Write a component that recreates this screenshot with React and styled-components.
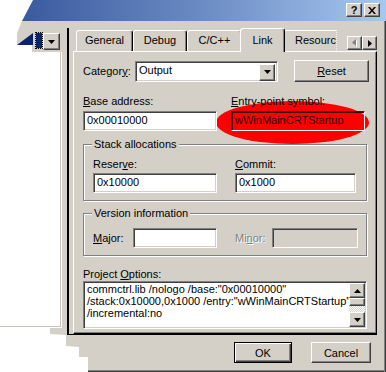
import React from 'react'
import styled, { createGlobalStyle, css } from 'styled-components'

const GlobalStyle = createGlobalStyle`
  html, body {
    margin: 0;
    padding: 0;
    background: #fff;
  }
  body {
    font-family: "Liberation Sans", Arial, sans-serif;
    font-size: 11px;
    color: #000;
  }
`;

const raised = css`
  background: #d4d0c8;
  border: 1px solid;
  border-color: #fff #404040 #404040 #fff;
  box-shadow: inset -1px -1px #808080;
`;

const Shot = styled.div`
  width: 386px;
  height: 372px;
  overflow: hidden;
  display: flex;
  flex-direction: column;
  background: #fff;
`;

const TitleBar = styled.div`
  flex: none;
  height: 21px;
  box-sizing: border-box;
  display: flex;
  justify-content: flex-end;
  align-items: flex-start;
  gap: 2px;
  padding: 3px 6px 0 0;
  background: linear-gradient(90deg, #34549a 0%, #6e8ec6 55%, #a6c8ee 100%);
  clip-path: polygon(33px 0, 100% 0, 100% 100%, 22px 100%);
`;

const CaptionButton = styled.div`
  ${raised};
  width: 16px;
  height: 14px;
  box-sizing: border-box;
  display: flex;
  align-items: center;
  justify-content: center;
  font-weight: bold;
  font-size: 11px;
  line-height: 1;
`;

const Body = styled.div`
  flex: 1;
  display: flex;
  background: #d4d0c8;
  box-shadow: inset -1px 0 #404040, inset -2px 0 #808080, inset 0 -1px #404040, inset 0 -2px #808080;
  clip-path: polygon(22px 0, 100% 0, 100% 100%, 88px 100%, 88px 336px, 79px 336px, 79px 326px, 66px 325px, 66px 314px, 50px 313px, 50px 306px, 0 306px, 0 31px, 32px 31px, 32px 24px, 17px 24px, 17px 12px);
`;

/* torn piece of the left pane */
const LeftPane = styled.div`
  width: 67px;
  flex: none;
  display: flex;
  flex-direction: column;
`;

const ComboScrap = styled.div`
  height: 31px;
  box-sizing: border-box;
  padding: 12px 0 0 17px;
  display: flex;
  align-items: flex-start;
`;

const SelTri = styled.div`
  width: 16px;
  height: 12px;
  background: #0a246a;
  clip-path: polygon(0 100%, 100% 0, 100% 100%);
`;

const SelBlock = styled.div`
  width: 6px;
  height: 15px;
  margin: 0 1px 0 3px;
  background: #0a246a;
  outline: 1px dotted #000;
`;

const DropButton = styled.div`
  ${raised};
  width: ${p => p.$w || 17}px;
  height: ${p => p.$h || 17}px;
  box-sizing: border-box;
  flex: none;
  display: flex;
  align-items: center;
  justify-content: center;
`;

const TreeBox = styled.div`
  width: 62px;
  height: 276px;
  box-sizing: border-box;
  background: #fff;
  border-right: 1px solid #fff;
  border-bottom: 1px solid #fff;
  box-shadow: inset -1px -1px #c8c4bc;
`;

const RightPane = styled.div`
  flex: 1;
  display: flex;
  flex-direction: column;
  padding-right: 9px;
`;

const Sheet = styled.div`
  margin-top: 7px;
  border-left: 2px solid #000;
  border-bottom: 1px solid #000;
  padding-left: 4px;
  display: flex;
  flex-direction: column;
`;

const TabStrip = styled.div`
  height: 23px;
  display: flex;
  align-items: flex-end;
  padding-left: 3px;
`;

const Tab = styled.div`
  position: relative;
  z-index: ${p => (p.$active ? 2 : 1)};
  flex: none;
  width: ${p => p.$w}px;
  height: ${p => (p.$active ? 24 : 21)}px;
  margin: 0 ${p => (p.$active ? -2 : 0)}px ${p => (p.$active ? -1 : 0)}px;
  box-sizing: border-box;
  background: #d4d0c8;
  border: 1px solid;
  border-bottom: none;
  border-color: #fff #000 transparent #fff;
  border-radius: 3px 3px 0 0;
  box-shadow: inset -1px 0 #808080;
  padding-top: ${p => (p.$active ? 5 : 3)}px;
  text-align: center;
  line-height: 13px;
  white-space: nowrap;
  overflow: hidden;
  ${p => p.$torn && css`
    text-align: left;
    padding-left: 11px;
    border-right: 1px dotted #f4f4f4;
    border-top-right-radius: 0;
    box-shadow: none;
  `}
`;

const Arrows = styled.div`
  margin: 0 0 1px auto;
  display: flex;
`;

const ArrowButton = styled.div`
  ${raised};
  width: 15px;
  height: 14px;
  box-sizing: border-box;
  display: flex;
  align-items: center;
  justify-content: center;
`;

const Panel = styled.div`
  position: relative;
  height: 283px;
  box-sizing: border-box;
  border: 1px solid;
  border-color: #fff #000 #000 #fff;
  box-shadow: inset -1px -1px #808080;
  padding: 8px 8px 0 9px;
`;

const Highlight = styled.div`
  position: absolute;
  left: 142px;
  top: 49px;
  width: 153px;
  height: 43px;
  border-radius: 50%;
  background: #ff0000;
`;

const Content = styled.div`
  position: relative;
  z-index: 1;
  display: flex;
  flex-direction: column;
`;

const TopRow = styled.div`
  display: flex;
  align-items: center;
  height: 22px;
`;

const Label = styled.div`
  line-height: 13px;
  height: 13px;
  white-space: nowrap;
  width: ${p => (p.$w ? `${p.$w}px` : 'auto')};
  flex: none;
  color: ${p => (p.$disabled ? '#808080' : '#000')};
  text-shadow: ${p => (p.$disabled ? '1px 1px 0 #fff' : 'none')};
`;

const Field = styled.div`
  width: ${p => (p.$w ? `${p.$w}px` : 'auto')};
  height: ${p => p.$h || 20}px;
  box-sizing: border-box;
  flex: none;
  border: 1px solid;
  border-color: #808080 #fff #fff #808080;
  box-shadow: inset 1px 1px #404040, inset -1px -1px #d4d0c8;
  background: ${p => (p.$disabled ? '#d4d0c8' : '#fff')};
  padding: 2px 3px 0;
  line-height: 13px;
  white-space: nowrap;
  overflow: hidden;
  ${p => p.$hot && css`
    background: transparent;
    border-color: #800000 #fff #fff #800000;
    box-shadow: inset 1px 1px #400000;
    color: #2a0000;
  `}
`;

const Combo = styled(Field)`
  display: flex;
  align-items: flex-start;
  justify-content: space-between;
  padding: 2px 2px 0 3px;
`;

const PushButton = styled.div`
  ${raised};
  width: ${p => p.$w}px;
  height: ${p => p.$h || 22}px;
  box-sizing: border-box;
  flex: none;
  display: flex;
  align-items: center;
  justify-content: center;
  margin-left: ${p => (p.$push ? 'auto' : '0')};
  margin-right: ${p => p.$mr || 0}px;
  ${p => p.$default && css`
    border: 1px solid #000;
    box-shadow: inset 1px 1px #fff, inset -1px -1px #404040, inset -2px -2px #808080;
  `}
`;

const Pair = styled.div`
  display: grid;
  grid-template-columns: ${p => p.$cols};
  column-gap: ${p => p.$gap}px;
  margin-top: ${p => p.$mt || 0}px;
`;

const Stack = styled.div`
  display: flex;
  flex-direction: column;
  gap: ${p => p.$gap || 3}px;
`;

const Group = styled.div`
  margin-top: ${p => p.$mt}px;
  width: 284px;
  box-sizing: border-box;
  border: 1px solid #808080;
  box-shadow: inset 1px 1px #fff, 1px 1px #fff;
  padding: 0 9px 7px;
  display: flex;
  flex-direction: column;
`;

const GroupCaption = styled.div`
  margin: -7px 0 0 -1px;
  padding: 0 2px;
  width: fit-content;
  background: #d4d0c8;
  line-height: 13px;
  height: 13px;
`;

const InlineRow = styled.div`
  display: flex;
  align-items: center;
  margin-top: ${p => p.$mt || 0}px;
`;

const Memo = styled.div`
  width: 284px;
  height: 48px;
  box-sizing: border-box;
  display: flex;
  border: 1px solid;
  border-color: #808080 #fff #fff #808080;
  box-shadow: inset 1px 1px #404040, inset -1px -1px #d4d0c8;
  background: #fff;
  padding: 1px;
`;

const MemoText = styled.div`
  flex: 1;
  overflow: hidden;
  white-space: nowrap;
  line-height: 12px;
  padding-left: 2px;
`;

const ScrollBar = styled.div`
  width: 16px;
  flex: none;
  display: flex;
  flex-direction: column;
`;

const Track = styled.div`
  flex: 1;
  background: repeating-conic-gradient(#fff 0 25%, #d4d0c8 0 50%) 0 0 / 2px 2px;
`;

const Footer = styled.div`
  flex: 1;
  display: flex;
  justify-content: flex-end;
  align-items: flex-start;
  gap: 19px;
  padding: 7px 6px 0 0;
`;

const Down = ({ color = '#000' }) => (
  <svg width="7" height="4" viewBox="0 0 7 4"><path d="M0 0h7L3.5 4z" fill={color} /></svg>
)
const Up = () => (
  <svg width="7" height="4" viewBox="0 0 7 4"><path d="M0 4h7L3.5 0z" fill="#000" /></svg>
)
const Left = () => (
  <svg width="5" height="8" viewBox="0 0 5 8">
    <path d="M5 1v7L1 4.5z" fill="#fff" />
    <path d="M4 0v7L0 3.5z" fill="#808080" />
  </svg>
)
const Right = () => (
  <svg width="4" height="7" viewBox="0 0 4 7"><path d="M0 0v7l4-3.5z" fill="#000" /></svg>
)
const Close = () => (
  <svg width="8" height="7" viewBox="0 0 8 7">
    <path d="M0 0h2l2 2.5L6 0h2L5 3.5 8 7H6L4 4.5 2 7H0l3-3.5z" fill="#000" />
  </svg>
)

const tabs = [
  { name: 'General', w: 57 },
  { name: 'Debug', w: 54 },
  { name: 'C/C++', w: 55 },
  { name: 'Link', w: 45, active: true },
  { name: 'Resources', w: 54, torn: true },
]

const App = () => {
  return (
    <Shot>
      <GlobalStyle />
      <TitleBar>
        <CaptionButton>?</CaptionButton>
        <CaptionButton><Close /></CaptionButton>
      </TitleBar>

      <Body>
        <LeftPane>
          <ComboScrap>
            <SelTri />
            <SelBlock />
            <DropButton><Down /></DropButton>
          </ComboScrap>
          <TreeBox />
        </LeftPane>

        <RightPane>
          <Sheet>
            <TabStrip>
              {tabs.map(t => (
                <Tab key={t.name} $w={t.w} $active={t.active} $torn={t.torn}>{t.name}</Tab>
              ))}
              <Arrows>
                <ArrowButton><Left /></ArrowButton>
                <ArrowButton><Right /></ArrowButton>
              </Arrows>
            </TabStrip>

            <Panel>
              <Highlight />
              <Content>
                <TopRow>
                  <Label $w={52}>Categor<u>y</u>:</Label>
                  <Combo $w={143} $h={21}>
                    <span>Output</span>
                    <DropButton $w={16} $h={17}><Down /></DropButton>
                  </Combo>
                  <PushButton $w={75} $push $mr={-1}><span><u>R</u>eset</span></PushButton>
                </TopRow>

                <Pair $cols="134px 134px" $gap={14} $mt={13}>
                  <Stack>
                    <Label><u>B</u>ase address:</Label>
                    <Field>0x00010000</Field>
                  </Stack>
                  <Stack>
                    <Label><u>E</u>ntry-point symbol:</Label>
                    <Field $hot>wWinMainCRTStartup</Field>
                  </Stack>
                </Pair>

                <Group $mt={13}>
                  <GroupCaption>Stack allocations</GroupCaption>
                  <Pair $cols="124px 121px" $gap={18} $mt={7}>
                    <Stack $gap={2}>
                      <Label>Reser<u>v</u>e:</Label>
                      <Field>0x10000</Field>
                    </Stack>
                    <Stack $gap={2}>
                      <Label><u>C</u>ommit:</Label>
                      <Field>0x1000</Field>
                    </Stack>
                  </Pair>
                </Group>

                <Group $mt={12}>
                  <GroupCaption>Version information</GroupCaption>
                  <InlineRow $mt={8}>
                    <Label $w={40}><u>M</u>ajor:</Label>
                    <Field $w={84} />
                    <Label $w={37} style={{ marginLeft: 18 }} $disabled>Mi<u>n</u>or:</Label>
                    <Field $w={86} $disabled />
                  </InlineRow>
                </Group>

                <Label style={{ marginTop: 12 }}>Project <u>O</u>ptions:</Label>
                <Memo>
                  <MemoText>
                    commctrl.lib /nologo /base:"0x00010000"<br />
                    /stack:0x10000,0x1000 /entry:"wWinMainCRTStartup"<br />
                    /incremental:no
                  </MemoText>
                  <ScrollBar>
                    <DropButton $w={16} $h={15}><Up /></DropButton>
                    <DropButton $w={16} $h={8} />
                    <Track />
                    <DropButton $w={16} $h={15}><Down /></DropButton>
                  </ScrollBar>
                </Memo>
              </Content>
            </Panel>
          </Sheet>

          <Footer>
            <PushButton $w={58} $h={21} $default>OK</PushButton>
            <PushButton $w={60} $h={21}>Cancel</PushButton>
          </Footer>
        </RightPane>
      </Body>
    </Shot>
  )
}

export default App
